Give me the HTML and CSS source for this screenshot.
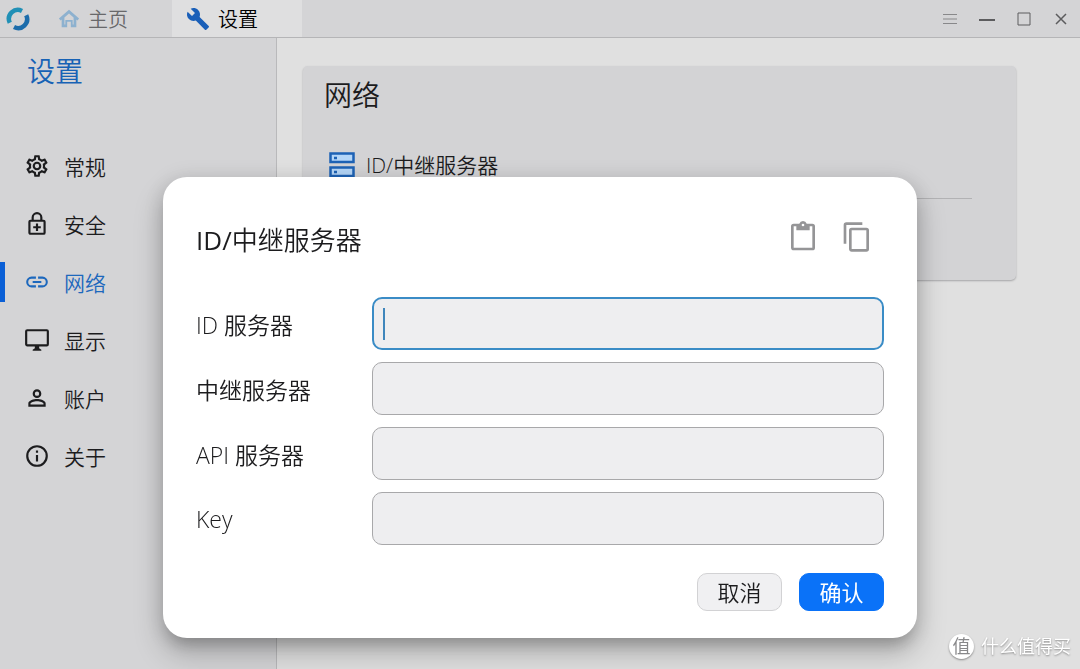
FILE: index.html
```
<!DOCTYPE html>
<html lang="zh-CN">
<head>
  <meta charset="UTF-8">
  <meta name="viewport" content="width=device-width, initial-scale=1.0">
  <title>设置</title>
  <link rel="stylesheet" href="styles.css">
</head>
<body>
  <div class="window">
    <header class="titlebar">
      <svg class="logo" viewBox="0 0 24 24" fill="none" stroke-width="4.500">
        <path d="M16 3.900A9 9 0 0 0 3.800 15.800" stroke="#2190b6"/>
        <path d="M8 20.100A9 9 0 0 0 20.200 8.200" stroke="#1c6cab"/>
      </svg>
      <nav class="tabs">
        <a href="#" class="tab">
          <svg class="home-icon" viewBox="0 0 24 24"><path d="M12 2L1 11.500 2.800 13.500l1.200-1V21h6v-6h4v6h6v-8.500l1.200 1 1.800-2zM12 6l5 4.300V18h-1v-5H8v5H7v-7.700z"/></svg>
          主页
        </a>
        <a href="#" class="tab active">
          <svg class="wrench-icon" viewBox="0 0 24 24"><path d="M22.700 19l-9.100-9.100c.9-2.300.4-5-1.500-6.900-2-2-5-2.400-7.400-1.300L9 6 6 9 1.600 4.700C.4 7.100.9 10.100 2.900 12.100c1.900 1.900 4.600 2.400 6.900 1.500l9.100 9.100c.4.4 1 .4 1.400 0l2.300-2.300c.5-.4.5-1.100.1-1.400z"/></svg>
          设置
        </a>
      </nav>
      <div class="controls">
        <button class="menu-btn" aria-label="菜单"><svg viewBox="0 0 16 16"><path d="M1 3.500h14M1 8h14M1 12.500h14"/></svg></button>
        <button aria-label="最小化"><svg viewBox="0 0 16 16"><path d="M0 9h16" stroke-width="2"/></svg></button>
        <button aria-label="最大化"><svg viewBox="0 0 16 16"><path d="M2 2h12v12H2z"/></svg></button>
        <button aria-label="关闭"><svg viewBox="0 0 16 16"><path d="M3 3l10 10M13 3L3 13" stroke-width="1.500"/></svg></button>
      </div>
    </header>

    <div class="content">
      <aside class="sidebar">
        <h1>设置</h1>
        <nav class="menu">
          <a href="#">
            <svg viewBox="0 0 24 24"><path d="M19.430 12.980c.04-.32.07-.64.07-.98s-.03-.66-.07-.98l2.110-1.650c.19-.15.24-.42.12-.64l-2-3.460c-.12-.22-.39-.3-.61-.22l-2.490 1c-.52-.4-1.080-.73-1.690-.98l-.38-2.650C14.460 2.180 14.250 2 14 2h-4c-.25 0-.46.18-.49.42l-.38 2.650c-.61.25-1.170.59-1.690.98l-2.490-1c-.23-.09-.49 0-.61.22l-2 3.460c-.13.22-.07.49.12.64l2.110 1.650c-.04.32-.07.65-.07.98s.03.66.07.98l-2.110 1.650c-.19.15-.24.42-.12.64l2 3.460c.12.22.39.3.61.22l2.490-1c.52.4 1.080.73 1.690.98l.38 2.650c.03.24.24.42.49.42h4c.25 0 .46-.18.49-.42l.38-2.650c.61-.25 1.170-.59 1.690-.98l2.490 1c.23.09.49 0 .61-.22l2-3.460c.12-.22.07-.49-.12-.64zM17.450 11.270c.06.5.06.95 0 1.460l-.14 1.130 1.970 1.530-.7 1.210-2.320-.93-.9.700c-.43.32-.84.56-1.250.73l-1.060.43-.35 2.470h-1.400l-.35-2.470-1.060-.43c-.43-.18-.83-.41-1.230-.71l-.91-.7-2.330.93-.7-1.210 1.970-1.530-.14-1.130c-.06-.5-.06-.98 0-1.460l.14-1.130-1.970-1.530.7-1.210 2.320.93.9-.7c.43-.32.84-.56 1.250-.73l1.060-.43L11.300 4h1.400l.35 2.490 1.060.43c.43.18.83.41 1.230.71l.91.7 2.330-.93.7 1.210-1.970 1.530zM12 8a4 4 0 1 0 0 8 4 4 0 0 0 0-8zm0 6a2 2 0 1 1 0-4 2 2 0 0 1 0 4z"/></svg>
            常规
          </a>
          <a href="#">
            <svg viewBox="0 0 24 24"><path d="M18 8h-1V6A5 5 0 0 0 7 6v2H6a2 2 0 0 0-2 2v10c0 1.100.9 2 2 2h12a2 2 0 0 0 2-2V10a2 2 0 0 0-2-2zM9 6a3 3 0 0 1 6 0v2H9zm9 14H6V10h12zM11 11.500h2V14h2.500v2H13v2.500h-2V16H8.500v-2H11z"/></svg>
            安全
          </a>
          <a href="#" class="active">
            <svg viewBox="0 0 24 24"><path d="M3.900 12A3.100 3.100 0 0 1 7 8.900h4V7H7a5 5 0 0 0 0 10h4v-1.900H7A3.100 3.100 0 0 1 3.900 12zM8 13h8v-2H8zm9-6h-4v1.900h4a3.100 3.100 0 0 1 0 6.200h-4V17h4a5 5 0 0 0 0-10z"/></svg>
            网络
          </a>
          <a href="#">
            <svg viewBox="0 0 24 24"><path d="M21 2H3a2 2 0 0 0-2 2v12c0 1.100.9 2 2 2h7v1.500L8 21v1h8v-1l-2-1.500V18h7a2 2 0 0 0 2-2V4a2 2 0 0 0-2-2zm0 14H3V4h18z"/></svg>
            显示
          </a>
          <a href="#">
            <svg viewBox="0 0 24 24"><path d="M12 4a4 4 0 1 0 0 8 4 4 0 0 0 0-8zm0 6a2 2 0 1 1 0-4 2 2 0 0 1 0 4zm0 3c-2.700 0-8 1.300-8 4v3h16v-3c0-2.700-5.300-4-8-4zm6 5H6v-1c0-.6 3.100-2 6-2s6 1.400 6 2z"/></svg>
            账户
          </a>
          <a href="#">
            <svg viewBox="0 0 24 24"><path d="M11 7h2v2h-2zm0 4h2v6h-2zm1-9a10 10 0 1 0 0 20 10 10 0 0 0 0-20zm0 18a8 8 0 1 1 0-16 8 8 0 0 1 0 16z"/></svg>
            关于
          </a>
        </nav>
      </aside>

      <main class="main">
        <section class="card">
          <h2>网络</h2>
          <button class="card-item">
            <svg viewBox="0 0 26 26" fill="none" stroke="#1d62b5" stroke-width="2.500"><path fill="#b4d6f8" d="M1.500 1.500h23v8.500h-23zM1.500 15.500h23v8.500h-23z"/><path d="M5 6h3M5 20h3"/></svg>
            ID/中继服务器
          </button>
          <hr>
        </section>
      </main>
    </div>
  </div>

  <div class="overlay">
    <form class="dialog" role="dialog" aria-labelledby="dialog-title">
      <div class="dialog-head">
        <h2 id="dialog-title"><span>ID/</span>中继服务器</h2>
        <button type="button" class="icon-btn" aria-label="粘贴"><svg viewBox="0 0 24 24"><path d="M19 2h-4.200a3 3 0 0 0-5.600 0H5a2 2 0 0 0-2 2v16c0 1.100.9 2 2 2h14a2 2 0 0 0 2-2V4a2 2 0 0 0-2-2zm-7 0a1 1 0 1 1 0 2 1 1 0 0 1 0-2zm7 18H5V4h2v3h10V4h2z"/></svg></button>
        <button type="button" class="icon-btn" aria-label="复制"><svg viewBox="0 0 24 24"><path d="M16 1H4a2 2 0 0 0-2 2v14h2V3h12zm3 4H8a2 2 0 0 0-2 2v14c0 1.100.9 2 2 2h11a2 2 0 0 0 2-2V7a2 2 0 0 0-2-2zm0 16H8V7h11z"/></svg></button>
      </div>
      <div class="fields">
        <label for="id-server">ID 服务器</label>
        <div class="input-wrap">
          <input type="text" id="id-server" class="focused">
          <span class="caret"></span>
        </div>
        <label for="relay-server">中继服务器</label>
        <input type="text" id="relay-server">
        <label for="api-server">API 服务器</label>
        <input type="text" id="api-server">
        <label for="key">Key</label>
        <input type="text" id="key">
      </div>
      <div class="actions">
        <button type="button" class="btn">取消</button>
        <button type="submit" class="btn primary">确认</button>
      </div>
    </form>
  </div>

  <div class="watermark"><span class="badge">值</span>什么值得买</div>
</body>
</html>
```
FILE: styles.css
```
*{
  box-sizing: border-box;
}
body{
  margin: 0;
  font-family: "Open Sans", "Noto Sans CJK SC", sans-serif;
  font-weight: 350;
  color: #1c1c1e;
}
h1, h2{
  margin: 0;
  font-weight: 350;
  font-size: 28px;
  line-height: 38px;
}
a{
  color: inherit;
  text-decoration: none;
}
button, input{
  font: inherit;
  color: inherit;
}
svg{
  display: block;
  flex: none;
  fill: currentColor;
}
.window{
  min-height: 100vh;
  display: flex;
  flex-direction: column;
}

/* title bar */
.titlebar{
  display: flex;
  align-items: center;
  height: 38px;
  background: #d4d4d6;
  border-bottom: 1px solid #b5b5b7;
}
.logo{
  width: 24px;
  height: 24px;
  margin: 0 10px 0 6px;
  fill: none;
}
.tabs{
  display: flex;
  align-self: stretch;
}
.tab{
  display: flex;
  align-items: center;
  gap: 8px;
  padding: 0 44px 0 18px;
  font-size: 20px;
  color: #68686a;
}
.tab.active{
  padding: 0 44px 0 14px;
  background: #dfdfe0;
  color: #000;
}
.home-icon{
  width: 22px;
  height: 22px;
  fill: #8db1cf;
}
.wrench-icon{
  width: 24px;
  height: 24px;
  fill: #1a5fb8;
}
.controls{
  display: flex;
  gap: 21px;
  margin-left: auto;
  padding-right: 11px;
}
.controls button{
  padding: 0;
  border: 0;
  background: none;
}
.controls svg{
  width: 16px;
  height: 16px;
  fill: none;
  stroke: #5c5c5e;
}
.controls .menu-btn svg{
  stroke: #88888a;
}

/* settings page */
.content{
  flex: 1;
  display: flex;
}
.sidebar{
  width: 277px;
  padding-top: 14px;
  background: #d4d4d6;
  border-right: 1px solid #b9b9bb;
}
.sidebar h1{
  padding-left: 27px;
  color: #1762b5;
}
.menu{
  display: flex;
  flex-direction: column;
  gap: 18px;
  margin-top: 56px;
}
.menu a{
  display: flex;
  align-items: center;
  gap: 14px;
  height: 40px;
  padding-left: 19px;
  border-left: 5px solid transparent;
  font-size: 21px;
}
.menu svg{
  width: 26px;
  height: 26px;
}
.menu .active{
  border-color: #0a5fd6;
  color: #1d68bd;
}
.main{
  flex: 1;
  padding: 28px 26px;
  background: #e0e0e0;
}
.card{
  max-width: 713px;
  height: 214px;
  padding: 10px 44px 0 21px;
  border-radius: 5px;
  background: #d3d3d5;
  box-shadow: 0 1px 2px #a5a5a7;
}
.card-item{
  display: flex;
  align-items: center;
  gap: 11px;
  margin-top: 35px;
  padding: 0 5px;
  border: 0;
  background: none;
  font-size: 21px;
  line-height: 32px;
}
.card-item svg{
  width: 26px;
  height: 26px;
}
.card hr{
  margin: 17px 0 0;
  border: 0;
  border-top: 1px solid #b2b2b4;
}

/* dialog */
.overlay{
  position: fixed;
  inset: 0;
  display: flex;
  justify-content: center;
  align-items: flex-start;
  padding: 177px 20px 0;
}
.dialog{
  width: 100%;
  max-width: 754px;
  padding: 32px 33px 27px;
  border-radius: 24px;
  background: #fff;
  box-shadow: 0 11px 15px -7px rgba(0,0,0,.2), 0 16px 28px 3px rgba(0,0,0,.18), 0 4px 20px 4px rgba(0,0,0,.1);
}
.dialog-head{
  display: flex;
  align-items: center;
  gap: 22px;
  height: 62px;
  padding-right: 11px;
}
.dialog-head h2{
  flex: 1;
  font-size: 26px;
}
.dialog-head h2 span{
  font-weight: 400;
}
.icon-btn{
  padding: 0 0 6px;
  border: 0;
  background: none;
  color: #959597;
}
.icon-btn svg{
  width: 32px;
  height: 32px;
}
.fields{
  display: grid;
  grid-template-columns: 176px 1fr;
  gap: 12px 0;
  align-items: center;
  margin-top: 26px;
  font-size: 23px;
}
.fields input{
  display: block;
  width: 100%;
  height: 53px;
  padding: 0 12px;
  border: 1px solid #a8a8aa;
  border-radius: 10px;
  outline: 0;
  background: #eeeef0;
}
.fields .focused{
  border: 2px solid #3a8cc6;
}
.input-wrap{
  position: relative;
}
.caret{
  position: absolute;
  left: 11px;
  top: 11px;
  width: 2px;
  height: 32px;
  background: #3f86bc;
}
.actions{
  display: flex;
  justify-content: flex-end;
  gap: 17px;
  margin-top: 28px;
}
.btn{
  width: 85px;
  height: 38px;
  padding: 0;
  border: 1px solid #d2d2d4;
  border-radius: 10px;
  background: #f0f0f2;
  font-size: 22px;
  line-height: 32px;
}
.btn.primary{
  border-color: #0a72f8;
  background: #0a72f8;
  color: #fff;
  font-weight: 400;
}

.watermark{
  position: fixed;
  right: 9px;
  bottom: 10px;
  display: flex;
  align-items: center;
  gap: 7px;
  color: #fff;
  font-size: 18px;
  font-weight: 400;
  line-height: 25px;
  text-shadow: 0 1px 2px #888;
}
.badge{
  width: 25px;
  height: 25px;
  border-radius: 50%;
  background: #fff;
  box-shadow: 0 1px 2px #888;
  color: #88888a;
  text-align: center;
  text-shadow: none;
}
```
